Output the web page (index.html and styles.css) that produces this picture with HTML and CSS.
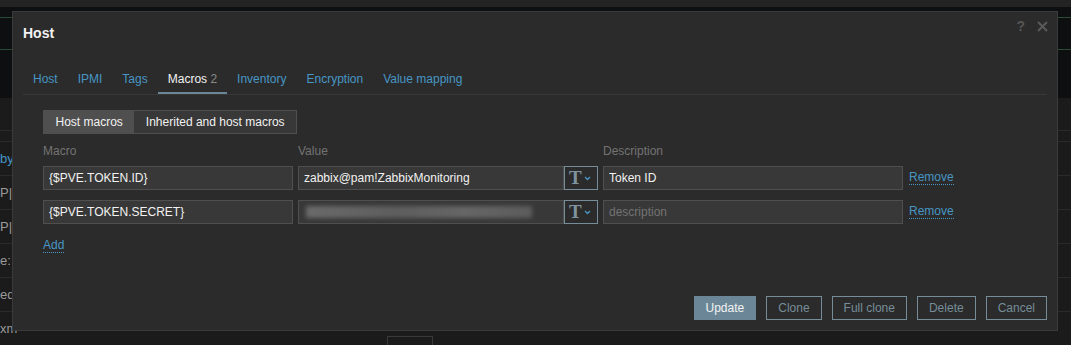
FILE: index.html
```html
<!DOCTYPE html>
<html lang="en">
<head>
  <meta charset="UTF-8" />
  <title>Host</title>
  <link rel="stylesheet" href="styles.css">
</head>
<body>
  <!-- page behind the dialog -->
  <div class="page">
    <div class="topbar"></div>
    <div class="header-band">
      <div class="green-line first"></div>
      <div class="green-line second"></div>
    </div>
    <div class="bg-table">
      <div class="bg-row"></div>
      <div class="bg-row"><span class="bg-link">by</span></div>
      <div class="bg-row"><span>P|</span></div>
      <div class="bg-row"><span>P|</span></div>
      <div class="bg-row"><span>e:</span></div>
      <div class="bg-row"><span>ed</span></div>
      <div class="bg-row"><span>xm</span><span class="bg-box"></span></div>
    </div>
  </div>

  <div class="overlay-dialog">
    <div class="dialog-head">
      <h4>Host</h4>
      <div class="head-controls">
        <span class="help-btn">?</span>
        <svg class="close-btn" width="11" height="11" viewBox="0 0 11 11">
          <path d="M1 1 L10 10 M10 1 L1 10" stroke="#5a5a5a" stroke-width="2" fill="none"/>
        </svg>
      </div>
    </div>

    <ul class="tabs">
      <li><a>Host</a></li>
      <li><a>IPMI</a></li>
      <li><a>Tags</a></li>
      <li class="active"><a>Macros <span class="count">2</span></a></li>
      <li><a>Inventory</a></li>
      <li><a>Encryption</a></li>
      <li><a>Value mapping</a></li>
    </ul>

    <div class="tab-body">
      <div class="radio-segmented">
        <span class="seg active">Host macros</span>
        <span class="seg">Inherited and host macros</span>
      </div>

      <div class="macro-grid">
        <div class="col-head">Macro</div>
        <div class="col-head">Value</div>
        <div class="col-head">Description</div>
        <div></div>

        <input class="field" type="text" value="{$PVE.TOKEN.ID}">
        <div class="value-group">
          <input class="field value" type="text" value="zabbix@pam!ZabbixMonitoring">
          <button class="type-btn">T<svg width="7" height="5" viewBox="0 0 7 5"><path d="M1 1 L3.5 3.5 L6 1" stroke="#4796c4" stroke-width="1.3" fill="none"/></svg></button>
        </div>
        <input class="field" type="text" value="Token ID">
        <a class="link">Remove</a>

        <input class="field" type="text" value="{$PVE.TOKEN.SECRET}">
        <div class="value-group">
          <div class="field value secret"><span class="blur"></span></div>
          <button class="type-btn">T<svg width="7" height="5" viewBox="0 0 7 5"><path d="M1 1 L3.5 3.5 L6 1" stroke="#4796c4" stroke-width="1.3" fill="none"/></svg></button>
        </div>
        <input class="field" type="text" placeholder="description">
        <a class="link">Remove</a>
      </div>

      <a class="link add">Add</a>
    </div>

    <div class="dialog-foot">
      <button class="btn main">Update</button>
      <button class="btn alt">Clone</button>
      <button class="btn alt">Full clone</button>
      <button class="btn alt">Delete</button>
      <button class="btn alt">Cancel</button>
    </div>
  </div>
</body>
</html>
```

FILE: styles.css
```css
body {
  margin: 0;
  width: 1071px;
  height: 345px;
  overflow: hidden;
  position: relative;
  background-color: #1b1b1b;
  font-family: Arial, "Liberation Sans", sans-serif;
  font-size: 12px;
  color: #f2f2f2;
}

/* background page */
.topbar {
  height: 7px;
  background-color: #232323;
}
.header-band {
  height: 91px;
  background-color: #0d0f11;
  padding-top: 10px;
  box-sizing: border-box;
}
.green-line {
  height: 1px;
  background-color: #2c4a38;
}
.green-line.second {
  margin-top: 31px;
}
.bg-table {
  padding-top: 32px;
}
.bg-row {
  height: 33px;
  border-top: 1px solid #2a2a2a;
  display: flex;
  align-items: center;
  color: #9a9a9a;
  font-size: 13px;
}
.bg-row:first-child {
  height: 10px;
}
.bg-link {
  color: #4796c4;
}
.bg-box {
  width: 44px;
  height: 14px;
  margin-left: 370px;
  margin-top: 30px;
  border: 1px solid #3a3a3a;
}

/* dialog */
.overlay-dialog {
  position: absolute;
  left: 12px;
  top: 11px;
  width: 1046px;
  height: 320px;
  box-sizing: border-box;
  background-color: #2b2b2b;
  border: 1px solid #3a3a3a;
  display: flex;
  flex-direction: column;
}
.dialog-head {
  display: flex;
  justify-content: space-between;
  align-items: flex-start;
  padding: 7px 9px 0 10px;
  height: 44px;
  box-sizing: border-box;
}
.dialog-head h4 {
  margin: 6px 0 0;
  font-size: 14px;
  line-height: 16px;
  font-weight: bold;
  color: #f2f2f2;
}
.head-controls {
  display: flex;
  align-items: center;
  gap: 12px;
}
.help-btn {
  color: #555;
  font-size: 14px;
  font-weight: bold;
  line-height: 14px;
}

.tabs {
  list-style: none;
  margin: 8px 10px 0;
  padding: 0;
  display: flex;
  border-bottom: 1px solid #383838;
}
.tabs li a {
  display: block;
  padding: 8px 10px 6px;
  line-height: 14px;
  color: #4796c4;
  border-bottom: 2px solid transparent;
}
.tabs li.active a {
  color: #f2f2f2;
  border-bottom-color: #6b8797;
}
.tabs .count {
  color: #8a8a8a;
}

.tab-body {
  padding: 15px 30px 0;
}
.radio-segmented {
  display: inline-flex;
  border: 1px solid #4f4f4f;
  height: 24px;
  box-sizing: border-box;
}
.seg {
  display: flex;
  align-items: center;
  padding: 0 11.5px;
  background-color: #383838;
  color: #f2f2f2;
}
.seg.active {
  background-color: #4f4f4f;
}

.macro-grid {
  display: grid;
  grid-template-columns: 250px 300px 300px auto;
  column-gap: 5px;
  row-gap: 10px;
  margin-top: 10px;
  align-items: center;
}
.col-head {
  color: #737373;
  line-height: 14px;
  margin-bottom: -2px;
}
.field {
  height: 24px;
  box-sizing: border-box;
  background-color: #383838;
  border: 1px solid #4f4f4f;
  color: #f2f2f2;
  font-family: Arial, "Liberation Sans", sans-serif;
  font-size: 12px;
  padding: 0 5px;
  margin: 0;
  outline: none;
  width: 100%;
}
.field::placeholder {
  color: #737373;
}
.value-group {
  display: flex;
}
.value-group .value {
  width: 266px;
  flex: none;
}
.secret {
  display: flex;
  align-items: center;
  padding-left: 7px;
}
.blur {
  display: block;
  width: 226px;
  height: 12px;
  background: linear-gradient(90deg, #6a6a6a, #5e5e5e 40%, #666 70%, #5c5c5c);
  filter: blur(2px);
}
.type-btn {
  width: 34px;
  height: 24px;
  box-sizing: border-box;
  border: 1px solid #768d99;
  background: transparent;
  color: #7f939e;
  font-family: "Liberation Serif", serif;
  font-weight: bold;
  font-size: 19px;
  line-height: 20px;
  padding: 0 0 0 4px;
  display: flex;
  align-items: center;
  gap: 2px;
}
.link {
  color: #4796c4;
  border-bottom: 1px dotted #4796c4;
  justify-self: start;
  line-height: 13px;
  margin-left: 1px;
}
.add {
  display: inline-block;
  margin-top: 15px;
  margin-left: 0;
}

.dialog-foot {
  margin-top: auto;
  display: flex;
  justify-content: flex-end;
  gap: 10px;
  padding: 0 10px 10px;
}
.btn {
  height: 24px;
  padding: 0 11px;
  border: 1px solid #768d99;
  font-family: Arial, "Liberation Sans", sans-serif;
  font-size: 12px;
}
.btn.main {
  background-color: #6b8797;
  border-color: #6b8797;
  color: #f2f2f2;
}
.btn.alt {
  background: transparent;
  color: #768d99;
}
```
